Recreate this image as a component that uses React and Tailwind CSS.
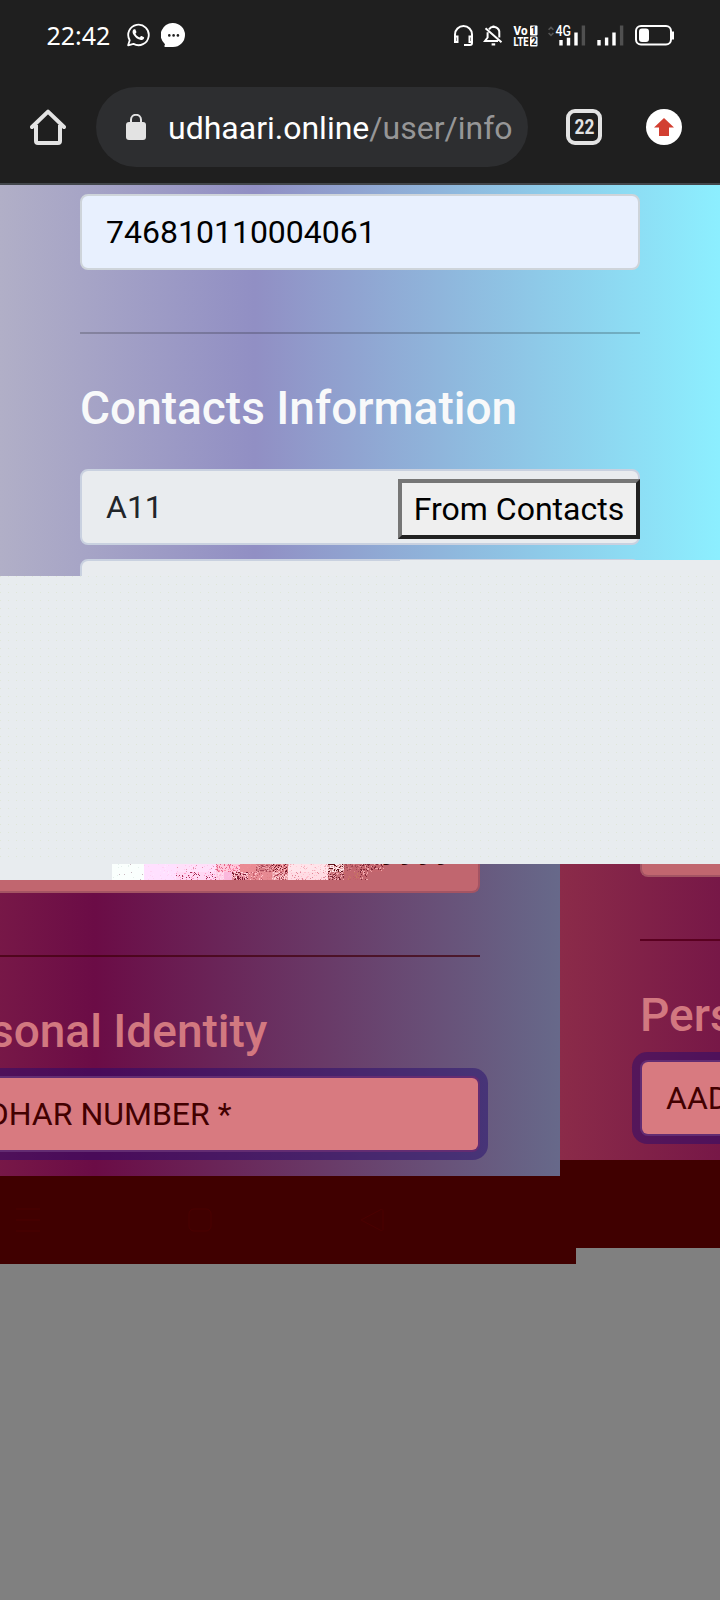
import React from 'react';

// Deterministic pseudo-random generator for the speckled strip.
function makeRandom(seed) {
  let s = seed;
  return () => {
    s = (s * 1664525 + 1013904223) % 4294967296;
    return s / 4294967296;
  };
}

const BLOCKS = [
  { x: 0, y: 0, w: 32, h: 16, base: '#fafffd', dots: ['#e4f0ec', '#c8b8c0'], density: 0.03 },
  { x: 32, y: 0, w: 32, h: 16, base: '#ffe0ff', dots: ['#ffd4f4', '#ffe8ff'], density: 0.08 },
  { x: 64, y: 0, w: 40, h: 8, base: '#ffe0fa', dots: ['#ffc8ec', '#e890b0'], density: 0.08 },
  { x: 64, y: 8, w: 40, h: 8, base: '#ffd8f4', dots: ['#ff9cc8', '#a83058'], density: 0.16 },
  { x: 104, y: 0, w: 24, h: 8, base: '#ffc8dc', dots: ['#ff90b0', '#e06888'], density: 0.35 },
  { x: 104, y: 8, w: 8, h: 8, base: '#ffd0e8', dots: ['#ffe0f0', '#ffb8d8'], density: 0.3 },
  { x: 112, y: 8, w: 8, h: 8, base: '#fbb8dc', dots: ['#fbb8dc', '#fbc0e0'], density: 0.1 },
  { x: 120, y: 8, w: 16, h: 8, base: '#e890a0', dots: ['#ffd4dc', '#7c1c34'], density: 0.55 },
  { x: 128, y: 0, w: 16, h: 8, base: '#ea8c94', dots: ['#e88890', '#ee9098'], density: 0.1 },
  { x: 136, y: 8, w: 24, h: 8, base: '#e88c94', dots: ['#ffc0c8', '#c86070'], density: 0.3 },
  { x: 144, y: 0, w: 16, h: 8, base: '#d87c84', dots: ['#f0a4ac', '#a84858'], density: 0.4 },
  { x: 160, y: 0, w: 16, h: 8, base: '#d87880', dots: ['#ffb4bc', '#701828'], density: 0.5 },
  { x: 152, y: 8, w: 8, h: 8, base: '#e68a92', dots: ['#e68a92', '#e28088'], density: 0.1 },
  { x: 160, y: 8, w: 16, h: 8, base: '#eda4ac', dots: ['#ffd4d8', '#b04858'], density: 0.4 },
  { x: 176, y: 0, w: 40, h: 8, base: '#ffe4ea', dots: ['#ffd0da', '#f4b0bc'], density: 0.12 },
  { x: 176, y: 8, w: 40, h: 8, base: '#ffdce4', dots: ['#ffc0cc', '#e08898'], density: 0.16 },
  { x: 216, y: 0, w: 16, h: 8, base: '#e0a0a4', dots: ['#ffe4e8', '#601018'], density: 0.65 },
  { x: 216, y: 8, w: 16, h: 8, base: '#c87078', dots: ['#f0a8b0', '#802838'], density: 0.5 },
  { x: 232, y: 0, w: 16, h: 8, base: '#c4666e', dots: ['#d88088', '#a04854'], density: 0.25 },
  { x: 232, y: 8, w: 16, h: 8, base: '#c4666e', dots: ['#c87860', '#c06068'], density: 0.2 },
  { x: 248, y: 0, w: 24, h: 8, base: '#c4666e', dots: ['#f0a4a8', '#802838'], density: 0.4 },
  { x: 248, y: 8, w: 8, h: 8, base: '#c4666e', dots: ['#f0a4a8', '#802838'], density: 0.3 },
];

function Speckle() {
  const random = makeRandom(41);
  const cells = [];
  BLOCKS.forEach((b, i) => {
    cells.push(<rect key={'b' + i} x={b.x} y={b.y} width={b.w} height={b.h} fill={b.base} />);
    for (let y = 0; y < b.h; y++) {
      for (let x = 0; x < b.w; x++) {
        if (random() < b.density) {
          cells.push(
            <rect key={i + '-' + x + '-' + y} x={b.x + x} y={b.y + y} width="1" height="1" fill={b.dots[random() < 0.5 ? 0 : 1]} />
          );
        }
      }
    }
  });
  return (
    <svg className="block" width="272" height="16" viewBox="0 0 272 16" shapeRendering="crispEdges">
      {cells}
    </svg>
  );
}

function StatusBar() {
  return (
    <div className="flex h-[70px] items-center pl-[46.5px]">
      <span className="w-[80.5px] font-['Noto_Sans',sans-serif] text-[25px] leading-none text-white">22:42</span>
      <svg className="-mt-px" width="23" height="24" viewBox="0 0 24 24" fill="white">
        <g transform="translate(-0.2 -0.4)">
          <path d="M17.472 14.382c-.297-.149-1.758-.867-2.03-.967-.273-.099-.471-.148-.67.15-.197.297-.767.966-.94 1.164-.173.199-.347.223-.644.075-.297-.15-1.255-.463-2.39-1.475-.883-.788-1.48-1.761-1.653-2.059-.173-.297-.018-.458.13-.606.134-.133.298-.347.446-.52.149-.174.198-.298.298-.497.099-.198.05-.371-.025-.52-.075-.149-.669-1.612-.916-2.207-.242-.579-.487-.5-.669-.51-.173-.008-.371-.01-.57-.01-.198 0-.52.074-.792.372-.272.297-1.04 1.016-1.04 2.479 0 1.462 1.065 2.875 1.213 3.074.149.198 2.096 3.2 5.077 4.487.709.306 1.262.489 1.694.625.712.227 1.36.195 1.871.118.571-.085 1.758-.719 2.006-1.413.248-.694.248-1.289.173-1.413-.074-.124-.272-.198-.57-.347" />
        </g>
        <path d="M1.2 22.8 2.8 17.4A10.7 10.7 0 1 1 6.8 21.3Z" fill="none" stroke="white" strokeWidth="1.9" strokeLinejoin="round" />
      </svg>
      <svg className="ml-[11px]" width="24" height="24" viewBox="0 0 24 24">
        <path d="M12 0a12 12 0 0 1 0 24H4.4a1 1 0 0 1-.8-1.6l.4-1.2A12 12 0 0 1 12 0Z" fill="white" />
        <g fill="#1f1f1f">
          <circle cx="8.3" cy="12.4" r="1.3" />
          <circle cx="12.6" cy="12.4" r="1.3" />
          <circle cx="16.9" cy="12.4" r="1.3" />
        </g>
      </svg>
      <svg className="mt-px ml-[268px]" width="222" height="24" viewBox="0 0 222 24" fill="none">
        <g stroke="white" strokeWidth="2">
          <path d="M2 18V10.5a8.5 8.5 0 0 1 17 0V19a2 2 0 0 1-2 2h-6" />
          <path d="M2 12.5h2.5v5.5H2ZM19 12.5h-2.5v5.5H19Z" />
        </g>
        <g stroke="white" strokeWidth="2">
          <path d="M36 5.3A5.7 5.7 0 0 1 46.3 9.3v4.2M34.6 8.3v5.2L32 17h13M32.5 4.2l16 14M40.5 1.5v2.4" />
          <path d="M38.6 20.4h3.6" strokeWidth="2.2" />
        </g>
        <g fill="white" fontFamily="Roboto, sans-serif" fontWeight="800">
          <text x="60.5" y="10.6" fontSize="12.5" textLength="14" lengthAdjust="spacingAndGlyphs">Vo</text>
          <text x="60.5" y="22" fontSize="13.5" textLength="15" lengthAdjust="spacingAndGlyphs">LTE</text>
        </g>
        <rect x="77" y="1.5" width="7.5" height="10" rx="1" fill="white" />
        <rect x="77" y="12.5" width="7.5" height="10" rx="1" fill="white" />
        <g fill="#1f1f1f" fontFamily="Roboto, sans-serif" fontWeight="700" fontSize="10" textAnchor="middle">
          <text x="80.5" y="10">1</text>
          <text x="80.8" y="21">2</text>
        </g>
        <path d="m95.6 5.8 2.4-2.4 2.4 2.4M95.6 9l2.4 2.4 2.4-2.4" stroke="#555" strokeWidth="1.6" />
        <text x="102.5" y="12.2" fill="white" fontFamily="Roboto, sans-serif" fontWeight="500" fontSize="14" textLength="15.5" lengthAdjust="spacingAndGlyphs">4G</text>
        <g stroke="white" strokeWidth="3.4">
          <path d="M108 16v5.5M115.5 13.8v7.7M123 8.5v13M146 16v5.5M153.6 13.5v8M161 8.5v13" />
          <path d="M130.4 1.5v20M168.6 1.5v20" stroke="#505050" />
        </g>
        <rect x="183" y="2" width="35" height="18.5" rx="5" stroke="white" strokeWidth="2" />
        <rect x="186" y="4.5" width="10" height="13.5" rx="3" fill="white" />
        <path d="M220 7.5v8" stroke="white" strokeWidth="2" />
      </svg>
    </div>
  );
}

function BrowserBar() {
  return (
    <div className="flex h-[113px] items-center pt-[1px] pl-[30px]">
      <svg width="36" height="36" viewBox="0 0 36 36" fill="none" stroke="#e3e3e3" strokeWidth="4">
        <path d="M6 16v16a2 2 0 0 0 2 2h20a2 2 0 0 0 2-2V16" />
        <path d="M2 18 18 2.6 34 18" strokeLinecap="round" strokeLinejoin="round" />
      </svg>
      <div className="ml-[30px] flex h-20 w-[432px] items-center rounded-full bg-[#2d2e30] pl-[30px]">
        <svg width="20" height="26" viewBox="0 0 20 26">
          <rect y="8" width="20" height="18" rx="3" fill="#e3e3e3" />
          <path d="M5 9V5.8a5 5 0 0 1 10 0V9" fill="none" stroke="#e3e3e3" strokeWidth="2" />
        </svg>
        <div className="mt-[2px] ml-[22px] w-[344px] overflow-hidden text-[32px] leading-[44px] whitespace-nowrap text-white">
          udhaari.online<span className="text-[#969697]">/user/info</span>
        </div>
      </div>
      <div className="ml-[38px] flex size-9 items-center justify-center rounded-[9px] border-4 border-[#e3e3e3]">
        <span className="scale-x-[0.86] text-[20px] leading-none font-bold text-[#e3e3e3]">22</span>
      </div>
      <div className="ml-11 flex size-9 items-center justify-center rounded-full bg-white">
        <svg width="20" height="18" viewBox="0 0 20 18">
          <path d="M10 0 20 9.5h-5V18H5V9.5H0Z" fill="#d23f31" />
        </svg>
      </div>
    </div>
  );
}

function ContactsForm() {
  return (
    <section className="h-[391px] overflow-hidden bg-[linear-gradient(to_right,#b1afc7_0px,#918fc4_255px,#8cefff_720px)] px-20 pt-[9px]">
      <div className="flex h-[76px] items-center rounded-lg border-2 border-[#ced4da] bg-[#e8f0fe] px-6 text-[32px] text-black">
        746810110004061
      </div>
      <div className="mt-[62px] h-[2px] bg-black/20" />
      <h3 className="mt-[47px] h-[88px] text-[46px] leading-[54px] font-medium whitespace-nowrap text-[#f8f9fa]">Contacts Information</h3>
      <div className="flex h-[76px] items-center rounded-lg border-2 border-[#c9d1e0] bg-[#e9ecef] pl-6 text-[32px] text-[#212529]">
        <span className="flex-1">A11</span>
        <button className="mt-[3px] -mr-[2px] h-[60px] w-[242px] border-4 border-t-[#767676] border-r-[#212121] border-b-[#212121] border-l-[#767676] bg-[#efefef] leading-[50px] whitespace-nowrap text-black">
          From Contacts
        </button>
      </div>
      <div className="mt-[14px] h-[76px] rounded-lg border-2 border-[#c9d1e0] bg-[#e9ecef]" />
    </section>
  );
}

function IdentityTitle({ children }) {
  return <h3 className="text-[46px] leading-[54px] font-medium whitespace-nowrap text-[#d27880]">{children}</h3>;
}

function LeftPanel() {
  return (
    <div className="w-[560px]">
      <div className="flex h-[312px] flex-col bg-[linear-gradient(to_right,#8b2b49_-160px,#6b0c46_95px,#67698a_560px)] pr-20">
        <div className="relative h-[29px] overflow-hidden rounded-br-lg border-r-2 border-b-2 border-[#a45463] bg-[#c1666f]">
          <div className="absolute top-0 left-0 h-4 w-28 bg-[#e8ecef]" />
          <div className="absolute top-0 left-28">
            <Speckle />
          </div>
          <span className="absolute -top-[29px] left-[379px] text-[32px] leading-[38px] font-medium text-[#300000]">9999</span>
        </div>
        <div className="mt-[62px] h-[2px] bg-[#40000c]/70" />
        <div className="mt-[47px] -ml-[80px] h-[74px]">
          <IdentityTitle>Personal Identity</IdentityTitle>
        </div>
        <div className="-ml-[80px] flex h-[72px] w-[558px] items-center rounded-md bg-[#d87a80] pl-[26px] text-[32px] whitespace-nowrap text-[#420000] shadow-[0_0_0_2px_#632c72,0_0_0_10px_rgba(35,10,110,0.48)]">
          AADHAR NUMBER *
        </div>
      </div>
      <div className="flex h-[72px] items-center bg-[#400000] pl-4">
        <svg className="mt-4" width="370" height="24" viewBox="0 0 370 24" fill="none" stroke="#4b0000">
          <path d="M0 1h24M0 12h24M0 23h24" />
          <rect x="173" y="1" width="22" height="22" rx="5" />
          <path d="M345 12 365 1.5a1.5 1.5 0 0 1 2 1.5v18a1.5 1.5 0 0 1-2 1.5Z" />
        </svg>
      </div>
    </div>
  );
}

function RightPanel() {
  return (
    <div className="w-[160px]">
      <div className="h-[296px] overflow-hidden bg-[linear-gradient(to_right,#8b2b49_0px,#6b0c46_255px)] pl-20">
        <div className="h-[13px] rounded-bl-lg border-b-2 border-l-2 border-[#a45463] bg-[#c1666f]" />
        <div className="mt-[62px] h-[2px] bg-[#5a0020]" />
        <div className="mt-[47px] h-[74px]">
          <IdentityTitle>Personal</IdentityTitle>
        </div>
        <div className="ml-[2px] flex h-[72px] w-[556px] items-center rounded-md bg-[#d87a80] pl-[24px] text-[32px] whitespace-nowrap text-[#420000] shadow-[0_0_0_2px_#632c72,0_0_0_10px_rgba(35,10,110,0.48)]">
          AADHAR NUMBER *
        </div>
      </div>
      <div className="h-[88px] bg-[#400000]" />
    </div>
  );
}

export default function App() {
  return (
    <div className="h-[1600px] w-[720px] overflow-hidden bg-[#808080] font-[Roboto,sans-serif]">
      <header className="h-[185px] border-b-2 border-[#43474c] bg-[#1f1f1f]">
        <StatusBar />
        <BrowserBar />
      </header>
      <ContactsForm />
      <div className="relative h-[288px] bg-[#e8ecef] bg-[radial-gradient(circle_at_0.5px_0.5px,#dfe6d8_0.7px,transparent_0.8px)] bg-[length:8px_8px]">
        <div className="absolute -top-[16px] right-0 h-4 w-[320px] bg-[#e8ecef]" />
      </div>
      <main className="flex overflow-hidden">
        <LeftPanel />
        <RightPanel />
      </main>
      <div className="h-4 w-[576px] bg-[#400000]" />
    </div>
  );
}
